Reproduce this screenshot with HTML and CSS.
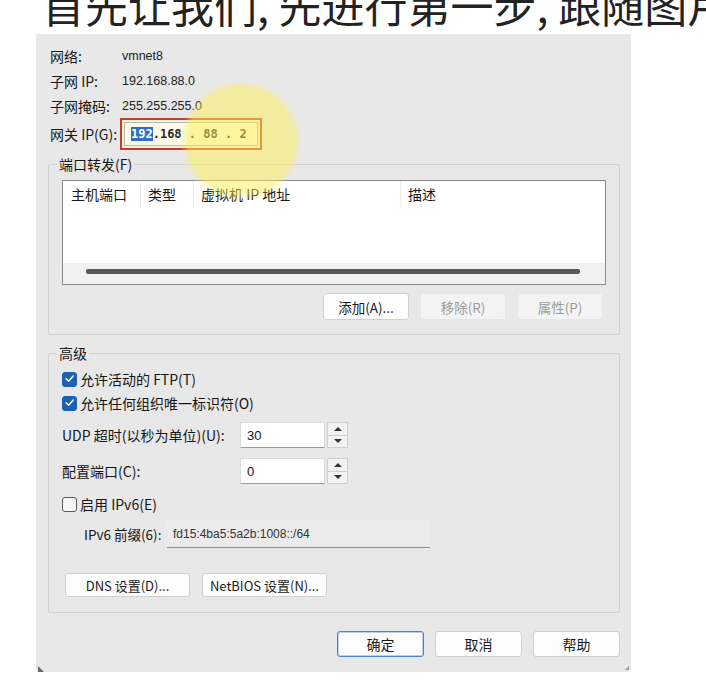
FILE: index.html
```html
<!DOCTYPE html>
<html lang="zh-CN">
<head>
<meta charset="utf-8">
<title>虚拟网络编辑器 - NAT 设置</title>
<link rel="stylesheet" href="styles.css">
</head>
<body>
<div class="heading">首先让我们, 先进行第一步, 跟随图片</div>
<div class="dialog">
  <div class="info">
    <div class="row"><span class="lbl">网络:</span><span class="val">vmnet8</span></div>
    <div class="row"><span class="lbl">子网 IP:</span><span class="val">192.168.88.0</span></div>
    <div class="row"><span class="lbl">子网掩码:</span><span class="val">255.255.255.0</span></div>
    <div class="row gw"><span class="lbl">网关 IP(G):</span>
      <div class="ipbox"><div class="ipfield"><span class="sel">192</span>.168 . 88 . 2</div></div>
    </div>
  </div>

  <fieldset class="group pf">
    <legend>端口转发(F)</legend>
    <div class="list">
      <div class="lhead">
        <div class="col c1">主机端口</div>
        <div class="col c2">类型</div>
        <div class="col c3">虚拟机 IP 地址</div>
        <div class="col c4">描述</div>
      </div>
      <div class="lbody"></div>
      <div class="hscroll"><div class="thumb"></div></div>
    </div>
    <div class="btnrow">
      <button class="btn">添加(A)...</button>
      <button class="btn" disabled>移除(R)</button>
      <button class="btn" disabled>属性(P)</button>
    </div>
  </fieldset>

  <fieldset class="group adv">
    <legend>高级</legend>
    <div class="chk-row"><span class="box on"><svg viewBox="0 0 15 15" width="15" height="15"><polyline points="4,7.8 6.6,10.3 11.2,5" fill="none" stroke="#fff" stroke-width="1.5" stroke-linecap="round" stroke-linejoin="round"/></svg></span><span>允许活动的 FTP(T)</span></div>
    <div class="chk-row"><span class="box on"><svg viewBox="0 0 15 15" width="15" height="15"><polyline points="4,7.8 6.6,10.3 11.2,5" fill="none" stroke="#fff" stroke-width="1.5" stroke-linecap="round" stroke-linejoin="round"/></svg></span><span>允许任何组织唯一标识符(O)</span></div>

    <div class="field-row first">
      <span class="flbl">UDP 超时(以秒为单位)(U):</span>
      <div class="spin-input">30</div>
      <div class="spin"><span class="up"><i></i></span><span class="down"><i></i></span></div>
    </div>
    <div class="field-row second">
      <span class="flbl">配置端口(C):</span>
      <div class="spin-input">0</div>
      <div class="spin"><span class="up"><i></i></span><span class="down"><i></i></span></div>
    </div>

    <div class="chk-row v6"><span class="box"></span><span>启用 IPv6(E)</span></div>

    <div class="prefix-row">
      <span class="plbl">IPv6 前缀(6):</span>
      <div class="pfield">fd15:4ba5:5a2b:1008::/64</div>
    </div>

    <div class="dns-row">
      <button class="btn wide">DNS 设置(D)...</button>
      <button class="btn wide">NetBIOS 设置(N)...</button>
    </div>
  </fieldset>

  <div class="footer">
    <button class="btn foot primary">确定</button>
    <button class="btn foot">取消</button>
    <button class="btn foot">帮助</button>
  </div>
</div>
<div class="spot"></div>
</body>
</html>
```

FILE: styles.css
```css
* { box-sizing: border-box; }
html, body { margin: 0; padding: 0; background: #fff; }
body {
  font-family: "Noto Sans CJK SC", "Liberation Sans", sans-serif;
  color: #161616;
  width: 706px;
  height: 685px;
  overflow: hidden;
  position: relative;
}

.heading {
  height: 34px;
  overflow: hidden;
  white-space: nowrap;
  padding-left: 42px;
  font-size: 43px;
  line-height: 8px;
  color: #222;
}

.dialog {
  margin-left: 36px;
  width: 595px;
  height: 638px;
  background: #e8e8e8;
  padding: 9px 11px 0 12px;
  position: relative;
  border-radius: 0 0 4px 4px;
  font-size: 14px;
}
.dialog::before {
  content: "";
  position: absolute;
  left: 2px;
  bottom: 0;
  width: 0; height: 0;
  border-left: 6px solid #6a6a6a;
  border-top: 6px solid transparent;
}
.dialog::after {
  content: "";
  position: absolute;
  right: 2px;
  bottom: 2px;
  width: 0; height: 0;
  border-right: 4px solid #9a9a9a;
  border-top: 4px solid transparent;
}

/* info rows */
.row { display: flex; align-items: center; height: 25px; padding-left: 2px; }
.lbl { width: 72px; flex: none; }
.val { font-family: "Liberation Sans", sans-serif; font-size: 12.5px; color: #222; }
.row.gw { height: 32px; }
.gw .lbl { width: 70px; }
.ipbox {
  width: 142px;
  height: 32px;
  border: 2px solid #cc3a2c;
  padding: 2px;
  background: #f7f3dc;
}
.ipfield {
  height: 24px;
  border: 1px solid #b8b8b0;
  background: #fdfbe8;
  padding-left: 6px;
  font-family: "DejaVu Sans Mono", monospace;
  font-weight: bold;
  font-size: 12px;
  line-height: 22px;
  white-space: pre;
  color: #2a2a2a;
}
.sel { background: #2f6fc6; color: #fff; }

/* group boxes */
.group {
  margin: 4px 0 0;
  padding: 6px 13px 14px;
  border: 1px solid #d2d2d2;
  border-radius: 2px;
  min-width: 0;
}
.group legend {
  padding: 0 2px;
  margin-left: -5px;
  font-size: 14px;
  line-height: 20px;
}

.list {
  height: 105px;
  background: #fff;
  border: 1px solid #8a8a8a;
  display: flex;
  flex-direction: column;
}
.lhead { display: flex; height: 26px; }
.lhead .col {
  display: flex;
  align-items: center;
  padding-left: 7px;
  border-right: 1px solid #ececec;
  flex: none;
}
.lhead .c1 { width: 78px; padding-left: 8px; }
.lhead .c2 { width: 53px; }
.lhead .c3 { width: 207px; }
.lhead .c4 { flex: 1; border-right: 0; }
.lbody { flex: 1; }
.hscroll {
  height: 21px;
  background: #f1f1f1;
  padding: 6px 25px 0 23px;
}
.thumb { height: 5px; background: #585858; border-radius: 2px; }

.btnrow {
  display: flex;
  justify-content: flex-end;
  gap: 11px;
  margin-top: 8px;
  padding-right: 3px;
}
.btn {
  font-family: "Noto Sans CJK SC", "Liberation Sans", sans-serif;
  font-size: 13.5px;
  height: 27px;
  width: 86px;
  background: #fdfdfd;
  border: 1px solid #d0d0d0;
  border-radius: 3px;
  color: #1a1a1a;
  padding: 0;
}
.btn:disabled { background: #f3f3f3; color: #9c9c9c; border-color: #e6e6e6; }

/* advanced */
.group.adv { margin-top: 8px; padding: 4px 13px 15px; }
.chk-row { display: flex; align-items: center; height: 24px; gap: 3px; }
.box {
  width: 15px;
  height: 15px;
  border-radius: 3px;
  border: 1.5px solid #5a5a5a;
  background: #f6f6f6;
  flex: none;
  display: flex;
}
.box.on { background: #1d5fb6; border-color: #1d5fb6; }
.box svg { margin: -1.5px; }

.field-row { display: flex; align-items: center; height: 26px; }
.field-row.first { margin-top: 7px; }
.field-row.second { margin-top: 10px; }
.flbl { width: 178px; flex: none; }
.spin-input {
  width: 85px;
  height: 26px;
  background: #fff;
  border: 1px solid #dcdcdc;
  border-bottom-color: #9a9a9a;
  padding-left: 6px;
  font-family: "Liberation Sans", sans-serif;
  font-size: 13px;
  display: flex;
  align-items: center;
}
.spin {
  margin-left: 2px;
  width: 21px;
  height: 26px;
  display: flex;
  flex-direction: column;
  gap: 1px;
  background: #cfcfcf;
  padding: 1px;
}
.spin span {
  flex: 1;
  background: #f2f2f2;
  display: flex;
  align-items: center;
  justify-content: center;
}
.spin .up i { width: 0; height: 0; border-left: 4px solid transparent; border-right: 4px solid transparent; border-bottom: 4px solid #333; }
.spin .down i { width: 0; height: 0; border-left: 4px solid transparent; border-right: 4px solid transparent; border-top: 4px solid #333; }

.chk-row.v6 { margin-top: 8px; }
.prefix-row { display: flex; align-items: center; height: 28px; margin-top: 4px; padding-left: 22px; }
.plbl { width: 83px; flex: none; font-size: 13.5px; }
.pfield {
  width: 263px;
  height: 28px;
  background: #ebebeb;
  border-bottom: 1px solid #8c8c8c;
  padding-left: 6px;
  font-family: "Liberation Sans", sans-serif;
  font-size: 12px;
  color: #333;
  display: flex;
  align-items: center;
}

.dns-row { display: flex; gap: 12px; margin-top: 25px; padding-left: 3px; }
.btn.wide { width: 125px; height: 24px; font-size: 13px; }

.footer {
  display: flex;
  justify-content: flex-end;
  gap: 11px;
  margin-top: 18px;
}
.btn.foot { width: 87px; height: 26px; font-size: 14px; }
.btn.primary { border: 1px solid #4a83c9; box-shadow: inset 0 0 0 1px #b9d1ee; }

.spot {
  position: absolute;
  left: 181px;
  top: 81px;
  width: 120px;
  height: 120px;
  border-radius: 50%;
  background: radial-gradient(circle, rgba(255, 238, 85, 0.5) 62%, rgba(255, 238, 85, 0) 72%);
  pointer-events: none;
}
```
